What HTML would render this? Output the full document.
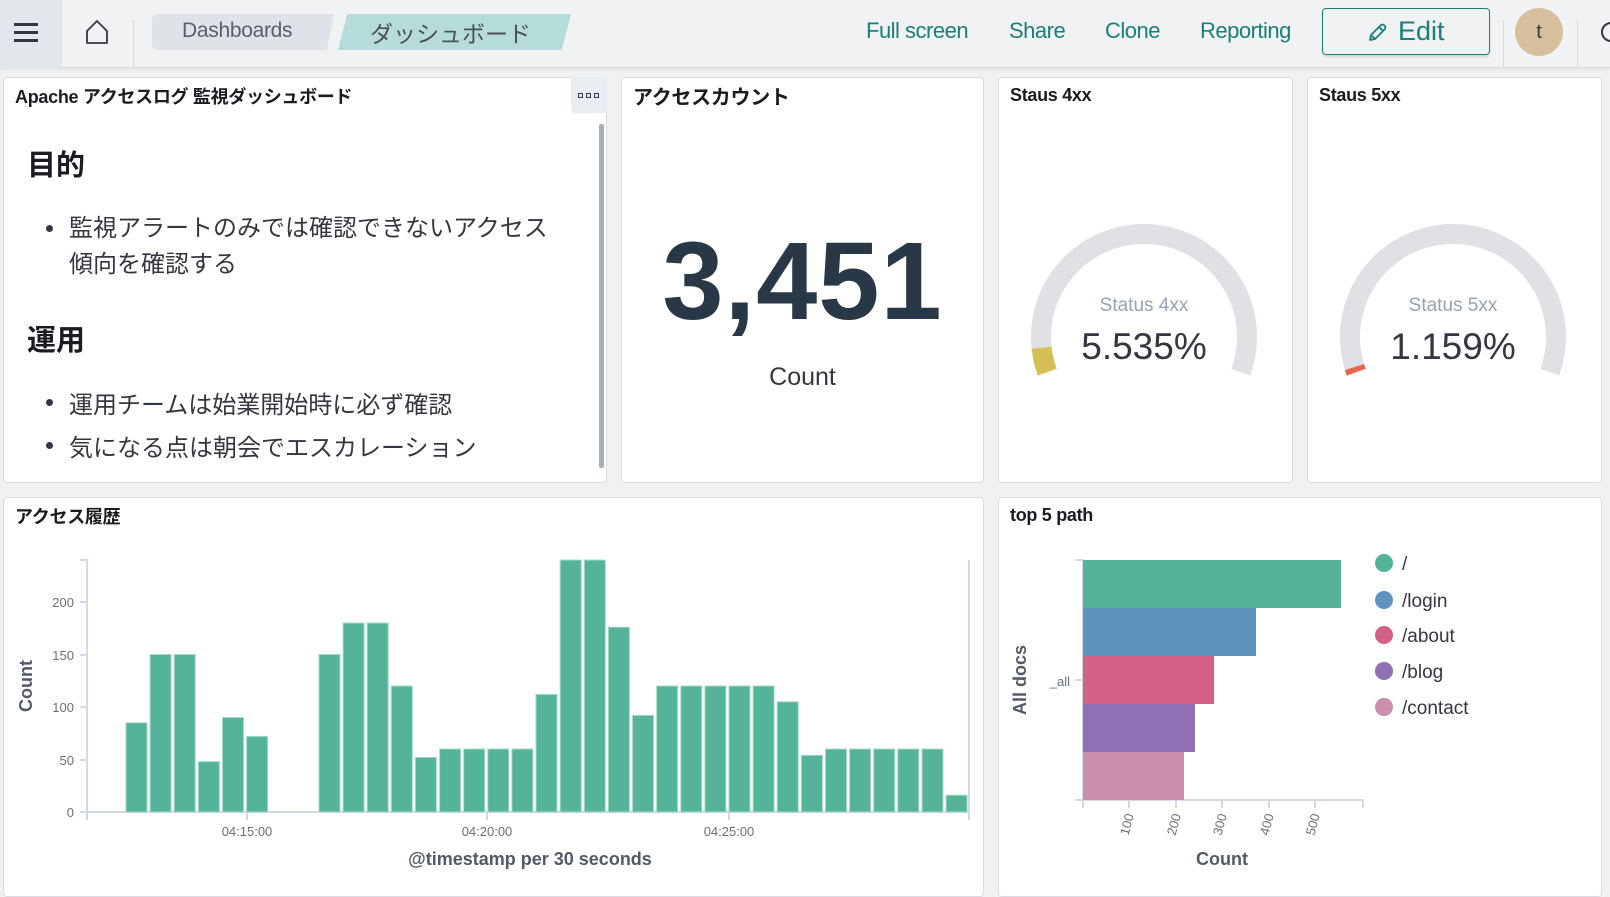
<!DOCTYPE html>
<html><head><meta charset="utf-8"><style>
*{margin:0;padding:0;box-sizing:border-box}
body{width:1610px;height:875px;overflow:hidden;background:#f0f1f3;font-family:"Liberation Sans","Noto Sans CJK JP",sans-serif;color:#343741;position:relative}
.a{position:absolute}
.hdr{left:0;top:0;width:1610px;height:68px;background:#f1f2f4;border-bottom:1px solid #d9dce1;box-shadow:0 1px 3px rgba(0,0,0,.08)}
.link{top:18px;font-size:22px;color:#1a7f78;letter-spacing:-0.5px}
.panel{background:#fff;border:1px solid #d8dce3;border-radius:4px}
.ttl{font-size:18px;font-weight:bold;color:#1a1c21;letter-spacing:-0.3px}
.md{font-size:24px;color:#343741;letter-spacing:0px}
.h{font-size:29px;font-weight:bold;color:#1a1c21}
.dot{width:7px;height:7px;border-radius:50%;background:#343741}
</style></head><body>
<div class="a hdr"></div>
<div class="a" style="left:0;top:0;width:62px;height:68px;background:#e3e6ea"></div>
<div class="a" style="left:14px;top:23px;width:24px;height:3px;background:#343741"></div>
<div class="a" style="left:14px;top:31px;width:24px;height:3px;background:#343741"></div>
<div class="a" style="left:14px;top:39px;width:24px;height:3px;background:#343741"></div>
<svg class="a" style="left:84px;top:18px" width="26" height="28" viewBox="0 0 26 28"><path d="M3 13 L13 3 L23 13 V25 H3 Z" fill="none" stroke="#343741" stroke-width="1.8" stroke-linejoin="round"/></svg>
<div class="a" style="left:133px;top:20px;width:1px;height:48px;background:#d3dae6"></div>
<div class="a" style="left:152px;top:14px;width:182px;height:36px;background:#dfe2e7;clip-path:polygon(0 0,100% 0,96% 100%,0 100%);border-radius:6px 0 0 6px"></div>
<div class="a" style="left:182px;top:19px;font-size:21px;color:#5a606b;letter-spacing:-0.3px">Dashboards</div>
<div class="a" style="left:338px;top:14px;width:233px;height:36px;background:#b5dcdb;clip-path:polygon(4% 0,100% 0,96% 100%,0 100%)"></div>
<div class="a" style="left:370px;top:15px;font-size:23px;color:#4c5058">ダッシュボード</div>
<div class="a link" style="left:866px">Full screen</div>
<div class="a link" style="left:1009px">Share</div>
<div class="a link" style="left:1105px">Clone</div>
<div class="a link" style="left:1200px">Reporting</div>
<div class="a" style="left:1322px;top:8px;width:168px;height:47px;border:1.5px solid #1a7f78;border-radius:4px;box-shadow:0 2px 2px rgba(0,0,0,.12)"></div>
<svg class="a" style="left:1366px;top:22px" width="22" height="22" viewBox="0 0 22 22"><path d="M4 18 L5 13 L15 3 Q17 2 18.5 3.5 Q20 5 19 7 L9 17 Z M13 5 L17 9 M5 13 L9 17" fill="none" stroke="#1a7f78" stroke-width="1.8" stroke-linejoin="round"/></svg>
<div class="a" style="left:1398px;top:16px;font-size:27px;color:#1a7f78">Edit</div>
<div class="a" style="left:1503px;top:20px;width:1px;height:48px;background:#d3dae6"></div>
<div class="a" style="left:1515px;top:8px;width:48px;height:48px;border-radius:50%;background:#d6bf9c;text-align:center;line-height:48px;font-size:20px;color:#343741">t</div>
<div class="a" style="left:1577px;top:20px;width:1px;height:48px;background:#d3dae6"></div>
<div class="a" style="left:1601px;top:22px;width:20px;height:20px;border:2px solid #343741;border-radius:50%"></div>

<!-- panel1 -->
<div class="a panel" style="left:3px;top:77px;width:604px;height:406px"></div>
<div class="a ttl" style="left:15px;top:83px">Apache アクセスログ 監視ダッシュボード</div>
<div class="a" style="left:571px;top:77px;width:36px;height:36px;background:#e9ecf0;border-radius:0 4px 0 4px"></div>
<div class="a" style="left:578px;top:93px;width:5px;height:5px;border:1.3px solid #343741"></div>
<div class="a" style="left:586px;top:93px;width:5px;height:5px;border:1.3px solid #343741"></div>
<div class="a" style="left:594px;top:93px;width:5px;height:5px;border:1.3px solid #343741"></div>
<div class="a" style="left:599px;top:124px;width:5px;height:344px;background:#a9b0b8;border-radius:2px"></div>
<div class="a h" style="left:27px;top:142px">目的</div>
<div class="a dot" style="left:46px;top:225px"></div>
<div class="a md" style="left:69px;top:211px;line-height:36px">監視アラートのみでは確認できないアクセス<br>傾向を確認する</div>
<div class="a h" style="left:27px;top:317px">運用</div>
<div class="a dot" style="left:46px;top:399px"></div>
<div class="a md" style="left:69px;top:385px">運用チームは始業開始時に必ず確認</div>
<div class="a dot" style="left:46px;top:442px"></div>
<div class="a md" style="left:69px;top:428px">気になる点は朝会でエスカレーション</div>

<!-- panel2 -->
<div class="a panel" style="left:621px;top:77px;width:363px;height:406px"></div>
<div class="a ttl" style="left:633px;top:81px;font-size:20px">アクセスカウント</div>
<div class="a" style="left:621px;top:218px;width:363px;text-align:center;font-size:110px;font-weight:bold;color:#293846;letter-spacing:1px">3,451</div>
<div class="a" style="left:621px;top:363px;width:363px;text-align:center;font-size:25px;color:#343741">Count</div>

<!-- panel3/4 -->
<div class="a panel" style="left:998px;top:77px;width:295px;height:406px"></div>
<div class="a ttl" style="left:1010px;top:85px">Staus 4xx</div>
<div class="a panel" style="left:1307px;top:77px;width:295px;height:406px"></div>
<div class="a ttl" style="left:1319px;top:85px">Staus 5xx</div>
<svg class="a" style="left:0;top:0" width="1610" height="500">
<g fill="none" stroke-width="20">
<path d="M1047.2 372.2 A103 103 0 1 1 1240.8 372.2" stroke="#e0e1e5"/>
<path d="M1047.2 372.2 A103 103 0 0 1 1041.6 347.8" stroke="#d6bf57"/>
<path d="M1356.2 372.2 A103 103 0 1 1 1549.8 372.2" stroke="#e0e1e5"/>
<path d="M1356.2 372.2 A103 103 0 0 1 1354.5 367.1" stroke="#e7664c"/>
</g>
<g font-family="Liberation Sans, sans-serif" text-anchor="middle">
<text x="1144" y="311" font-size="19" fill="#98a2b3">Status 4xx</text>
<text x="1144" y="359" font-size="37" fill="#343741">5.535%</text>
<text x="1453" y="311" font-size="19" fill="#98a2b3">Status 5xx</text>
<text x="1453" y="359" font-size="37" fill="#343741">1.159%</text>
</g>
</svg>

<!-- panel5 -->
<div class="a panel" style="left:3px;top:497px;width:981px;height:400px"></div>
<div class="a ttl" style="left:15px;top:503px">アクセス履歴</div>
<!-- panel6 -->
<div class="a panel" style="left:998px;top:497px;width:604px;height:400px"></div>
<div class="a ttl" style="left:1010px;top:505px">top 5 path</div>

<svg class="a" style="left:0;top:0" width="1610" height="875" font-family="Liberation Sans, sans-serif">
<g stroke="#d3dae6" stroke-width="2" fill="none">
<path d="M80 560 H87 V812 H969 M969 560 V820 M87 812 V820 M247 812 V820 M487 812 V820 M729 812 V820"/>
<path d="M80 602 H87 M80 655 H87 M80 707 H87 M80 760 H87 M80 812 H87"/>
</g>
<g fill="#69707d" font-size="13" text-anchor="end">
<text x="74" y="607">200</text><text x="74" y="660">150</text><text x="74" y="712">100</text><text x="74" y="765">50</text><text x="74" y="817">0</text>
</g>
<g fill="#69707d" font-size="13" text-anchor="middle">
<text x="247" y="836">04:15:00</text><text x="487" y="836">04:20:00</text><text x="729" y="836">04:25:00</text>
</g>
<text x="530" y="865" text-anchor="middle" font-size="18" font-weight="bold" fill="#535966">@timestamp per 30 seconds</text>
<text transform="translate(32 686) rotate(-90)" text-anchor="middle" font-size="18" font-weight="bold" fill="#535966">Count</text>
<g fill="#54b399" stroke="#a5dcca" stroke-width="1" id="bars"></g>

<g stroke="#d3dae6" stroke-width="2" fill="none">
<path d="M1075 560 H1083 V800 M1075 800 H1363 V808 M1083 800 V808 M1129 800 V808 M1176 800 V808 M1222 800 V808 M1269 800 V808 M1315 800 V808 M1075 680 H1083"/>
</g>
<rect x="1083" y="560" width="258" height="48" fill="#54b399"/>
<rect x="1083" y="608" width="173" height="48" fill="#6092c0"/>
<rect x="1083" y="656" width="131" height="48" fill="#d36086"/>
<rect x="1083" y="704" width="112" height="48" fill="#9170b8"/>
<rect x="1083" y="752" width="101" height="48" fill="#ca8eae"/>
<text x="1070" y="686" text-anchor="end" font-size="13" fill="#69707d">_all</text>
<g font-size="13" fill="#69707d" text-anchor="end">
<text transform="translate(1134 815) rotate(-75)">100</text>
<text transform="translate(1181 815) rotate(-75)">200</text>
<text transform="translate(1227 815) rotate(-75)">300</text>
<text transform="translate(1274 815) rotate(-75)">400</text>
<text transform="translate(1320 815) rotate(-75)">500</text>
</g>
<text x="1222" y="865" text-anchor="middle" font-size="18" font-weight="bold" fill="#535966">Count</text>
<text transform="translate(1026 680) rotate(-90)" text-anchor="middle" font-size="18" font-weight="bold" fill="#535966">All docs</text>
<g font-size="19" fill="#343741">
<circle cx="1384" cy="563" r="9" fill="#54b399"/><text x="1402" y="570">/</text>
<circle cx="1384" cy="600" r="9" fill="#6092c0"/><text x="1402" y="607">/login</text>
<circle cx="1384" cy="635" r="9" fill="#d36086"/><text x="1402" y="642">/about</text>
<circle cx="1384" cy="671" r="9" fill="#9170b8"/><text x="1402" y="678">/blog</text>
<circle cx="1384" cy="707" r="9" fill="#ca8eae"/><text x="1402" y="714">/contact</text>
</g>
</svg>
<script>
var v=[85,150,150,48,90,72,0,0,150,180,180,120,52,60,60,60,60,112,240,240,176,92,120,120,120,120,120,105,54,60,60,60,60,60,16];
var g=document.getElementById('bars'),s='';
v.forEach(function(x,i){if(!x)return;var h=x*1.05;s+='<rect x="'+(126+i*24.12).toFixed(1)+'" y="'+(812-h).toFixed(1)+'" width="21" height="'+h.toFixed(1)+'"/>';});
g.innerHTML=s;
</script>
</body></html>
